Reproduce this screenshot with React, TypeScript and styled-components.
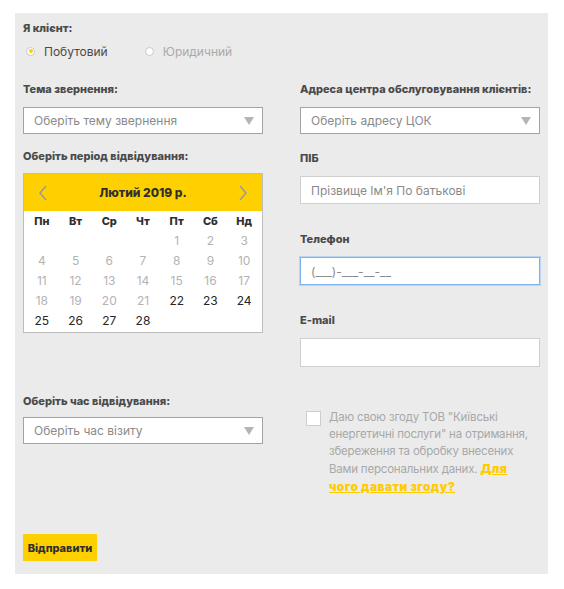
import React from "react";
import styled, { createGlobalStyle } from "styled-components";

const Global = createGlobalStyle`
  html, body { margin: 0; padding: 0; background: #fff; }
  body { font-family: Inter, "Noto Sans", sans-serif; }
  * { box-sizing: border-box; }
`;

const Panel = styled.form`
  margin: 13px 0 0 15px;
  width: 533px;
  height: 561px;
  background: #ebebeb;
  padding: 8px 8px 0 8px;
  display: flex;
  flex-direction: column;
`;

const Label = styled.div<{ $mt?: number }>`
  font-size: 11px;
  font-weight: 800;
  line-height: 14px;
  color: #4a4a4a;
  margin-top: ${(p) => p.$mt ?? 0}px;
  white-space: nowrap;
`;

const RadioRow = styled.div`
  display: flex;
  gap: 37px;
  margin-top: 8px;
  padding-left: 3px;
  height: 16px;
  align-items: center;
`;

const RadioOption = styled.label<{ $active?: boolean }>`
  display: flex;
  align-items: center;
  gap: 9px;
  font-size: 12px;
  color: ${(p) => (p.$active ? "#4a4a4a" : "#aaaaaa")};
`;

const RadioDot = styled.span<{ $active?: boolean }>`
  width: 9px;
  height: 9px;
  border-radius: 50%;
  background: #fff;
  border: 1px solid #c8c8c8;
  display: flex;
  align-items: center;
  justify-content: center;
  &::after {
    content: "";
    width: 4px;
    height: 4px;
    border-radius: 50%;
    background: ${(p) => (p.$active ? "#ffcf00" : "transparent")};
  }
`;

const Columns = styled.div`
  display: grid;
  grid-template-columns: 240px 240px;
  column-gap: 37px;
  margin-top: 23px;
  align-items: start;
`;

const Column = styled.div`
  display: flex;
  flex-direction: column;
`;

const Select = styled.div<{ $mt?: number }>`
  height: 27px;
  margin-top: ${(p) => p.$mt ?? 11}px;
  background: #fff;
  border: 1px solid #a3a3a3;
  display: flex;
  align-items: center;
  justify-content: space-between;
  padding: 0 8px 0 10px;
  font-size: 12px;
  color: #8a8a8a;
`;

const Caret = styled.span`
  width: 0;
  height: 0;
  border-left: 5px solid transparent;
  border-right: 5px solid transparent;
  border-top: 8px solid #b5b5b5;
`;

const TextInput = styled.div<{ $focused?: boolean; $h?: number }>`
  height: ${(p) => p.$h ?? 28}px;
  margin-top: 11px;
  background: #fff;
  border: 1px solid ${(p) => (p.$focused ? "#7fb3f0" : "#cfcfcf")};
  box-shadow: ${(p) => (p.$focused ? "0 0 0 1px #b9d5f5" : "none")};
  display: flex;
  align-items: center;
  padding: 0 10px;
  font-size: 12px;
  color: #8a8a8a;
`;

const Calendar = styled.div`
  margin-top: 10px;
  border: 1px solid #bdbdbd;
  background: #fff;
  width: 240px;
  padding-bottom: 2px;
`;

const CalHeader = styled.div`
  height: 37px;
  background: #ffd000;
  display: flex;
  align-items: center;
  justify-content: space-between;
  padding: 0 14px 0 14px;
  font-size: 12px;
  font-weight: 800;
  color: #2f2f2f;
`;

const Grid = styled.div`
  display: grid;
  grid-template-columns: repeat(7, 1fr);
  padding: 0 1px;
`;

const Weekday = styled.div`
  height: 19px;
  display: flex;
  align-items: center;
  justify-content: center;
  font-size: 11px;
  font-weight: 800;
  color: #2f2f2f;
`;

const Day = styled.div<{ $off?: boolean }>`
  height: 20px;
  display: flex;
  align-items: center;
  justify-content: center;
  font-size: 12px;
  color: ${(p) => (p.$off ? "#b3b3b3" : "#262626")};
`;

const Consent = styled.div`
  display: flex;
  gap: 8px;
  margin-top: 42px;
  padding-left: 6px;
`;

const CheckBox = styled.span`
  flex: none;
  width: 15px;
  height: 15px;
  margin-top: 2px;
  background: #fff;
  border: 1px solid #cdcdcd;
`;

const ConsentText = styled.p`
  margin: 0;
  font-size: 11.5px;
  letter-spacing: -0.2px;
  line-height: 17px;
  color: #a8a8a8;
  width: 210px;
`;

const Link = styled.a`
  color: #ffcc00;
  font-size: 12px;
  font-weight: 900;
  letter-spacing: 0.4px;
  text-decoration: underline;
`;

const Submit = styled.button`
  align-self: flex-start;
  margin-top: 38px;
  height: 27px;
  width: 74px;
  border: none;
  background: #ffd000;
  font-family: inherit;
  font-size: 11px;
  font-weight: 800;
  color: #2f2f2f;
  padding: 0;
`;

const Arrow = ({ dir }: { dir: "l" | "r" }) => (
  <svg width="10" height="16" viewBox="0 0 10 16">
    <path
      d={dir === "l" ? "M8 1 L2 8 L8 15" : "M2 1 L8 8 L2 15"}
      fill="none"
      stroke="#9a9a9a"
      strokeWidth="1.5"
    />
  </svg>
);

const weekdays = ["Пн", "Вт", "Ср", "Чт", "Пт", "Сб", "Нд"];

export default function App() {
  const cells: (number | null)[] = [null, null, null, null];
  for (let d = 1; d <= 28; d++) cells.push(d);
  return (
    <>
      <Global />
      <Panel>
        <Label>Я клієнт:</Label>
        <RadioRow>
          <RadioOption $active>
            <RadioDot $active />
            Побутовий
          </RadioOption>
          <RadioOption>
            <RadioDot />
            Юридичний
          </RadioOption>
        </RadioRow>
        <Columns>
          <Column>
            <Label>Тема звернення:</Label>
            <Select>
              Оберіть тему звернення
              <Caret />
            </Select>
            <Label $mt={15}>Оберіть період відвідування:</Label>
            <Calendar>
              <CalHeader>
                <Arrow dir="l" />
                Лютий 2019 р.
                <Arrow dir="r" />
              </CalHeader>
              <Grid>
                {weekdays.map((w) => (
                  <Weekday key={w}>{w}</Weekday>
                ))}
                {cells.map((d, i) => (
                  <Day key={i} $off={d !== null && d < 22}>
                    {d ?? ""}
                  </Day>
                ))}
              </Grid>
            </Calendar>
            <Label $mt={61}>Оберіть час відвідування:</Label>
            <Select $mt={9}>
              Оберіть час візиту
              <Caret />
            </Select>
          </Column>
          <Column>
            <Label>Адреса центра обслуговування клієнтів:</Label>
            <Select>
              Оберіть адресу ЦОК
              <Caret />
            </Select>
            <Label $mt={17}>ПІБ</Label>
            <TextInput>Прізвище Ім'я По батькові</TextInput>
            <Label $mt={28}>Телефон</Label>
            <TextInput $focused>(___)-___-__-__</TextInput>
            <Label $mt={28}>E-mail</Label>
            <TextInput $h={29} />
            <Consent>
              <CheckBox />
              <ConsentText>
                Даю свою згоду ТОВ "Київські енергетичні послуги" на отримання,
                збереження та обробку внесених Вами персональних даних.{" "}
                <Link>Для чого давати згоду?</Link>
              </ConsentText>
            </Consent>
          </Column>
        </Columns>
        <Submit type="button">Відправити</Submit>
      </Panel>
    </>
  );
}
